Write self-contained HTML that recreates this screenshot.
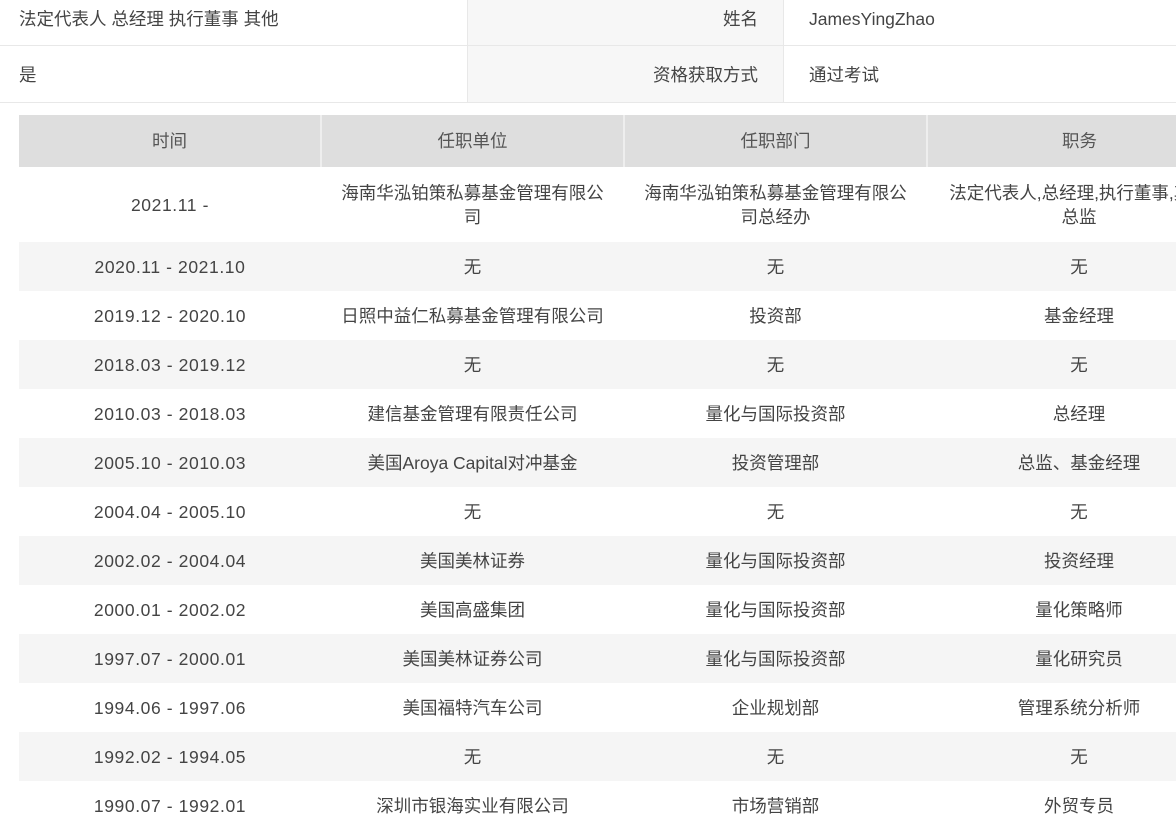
<!DOCTYPE html>
<html><head><meta charset="utf-8"><style>
body{margin:0;width:1176px;height:831px;overflow:hidden;background:#fff;font-family:"Liberation Sans","Noto Sans CJK SC",sans-serif;font-size:17.5px;color:#444;}
.r{position:absolute;left:0;width:1176px;height:45px;border-bottom:1px solid #e8e8e8;}
.c1{position:absolute;left:19px;line-height:38px;}
.lab{position:absolute;left:467px;width:290px;padding-right:25px;text-align:right;background:#f7f7f7;border-left:1px solid #e8e8e8;border-right:1px solid #e8e8e8;height:100%;line-height:38px;}
.val{position:absolute;left:809px;line-height:38px;}
table{position:absolute;left:19px;top:115px;border-collapse:collapse;table-layout:fixed;width:1212px;}
td,th{box-sizing:border-box;text-align:center;padding:0 4px;font-weight:normal;height:49px;line-height:24px;white-space:nowrap;}
td:first-child{letter-spacing:0.6px}
th{background:#dedede;height:52px;border-left:2px solid #eee;color:#555;}
th:first-child{border-left:none}
tr:nth-child(odd) td{background:#f5f5f5;}
tr.first td{height:75px;background:#fff}
.wrap{position:absolute;left:0;top:0;width:1176px;height:831px;overflow:hidden}
</style></head><body><div class="wrap">
<div class="r" style="top:0"><span class="c1">法定代表人 总经理 执行董事 其他</span><div class="lab">姓名</div><span class="val">JamesYingZhao</span></div>
<div class="r" style="top:46px;height:56px"><span class="c1" style="line-height:58px">是</span><div class="lab" style="line-height:58px">资格获取方式</div><span class="val" style="line-height:58px">通过考试</span></div>
<table>
<colgroup><col style="width:302px"><col style="width:303px"><col style="width:303px"><col style="width:304px"></colgroup>
<tr><th>时间</th><th>任职单位</th><th>任职部门</th><th>职务</th></tr>
<tr class="first"><td>2021.11 -</td><td>海南华泓铂策私募基金管理有限公<br>司</td><td>海南华泓铂策私募基金管理有限公<br>司总经办</td><td>法定代表人,总经理,执行董事,其他<br>总监</td></tr>
<tr><td>2020.11 - 2021.10</td><td>无</td><td>无</td><td>无</td></tr>
<tr><td>2019.12 - 2020.10</td><td>日照中益仁私募基金管理有限公司</td><td>投资部</td><td>基金经理</td></tr>
<tr><td>2018.03 - 2019.12</td><td>无</td><td>无</td><td>无</td></tr>
<tr><td>2010.03 - 2018.03</td><td>建信基金管理有限责任公司</td><td>量化与国际投资部</td><td>总经理</td></tr>
<tr><td>2005.10 - 2010.03</td><td>美国Aroya Capital对冲基金</td><td>投资管理部</td><td>总监、基金经理</td></tr>
<tr><td>2004.04 - 2005.10</td><td>无</td><td>无</td><td>无</td></tr>
<tr><td>2002.02 - 2004.04</td><td>美国美林证券</td><td>量化与国际投资部</td><td>投资经理</td></tr>
<tr><td>2000.01 - 2002.02</td><td>美国高盛集团</td><td>量化与国际投资部</td><td>量化策略师</td></tr>
<tr><td>1997.07 - 2000.01</td><td>美国美林证券公司</td><td>量化与国际投资部</td><td>量化研究员</td></tr>
<tr><td>1994.06 - 1997.06</td><td>美国福特汽车公司</td><td>企业规划部</td><td>管理系统分析师</td></tr>
<tr><td>1992.02 - 1994.05</td><td>无</td><td>无</td><td>无</td></tr>
<tr><td>1990.07 - 1992.01</td><td>深圳市银海实业有限公司</td><td>市场营销部</td><td>外贸专员</td></tr>
</table>
</div></body></html>
